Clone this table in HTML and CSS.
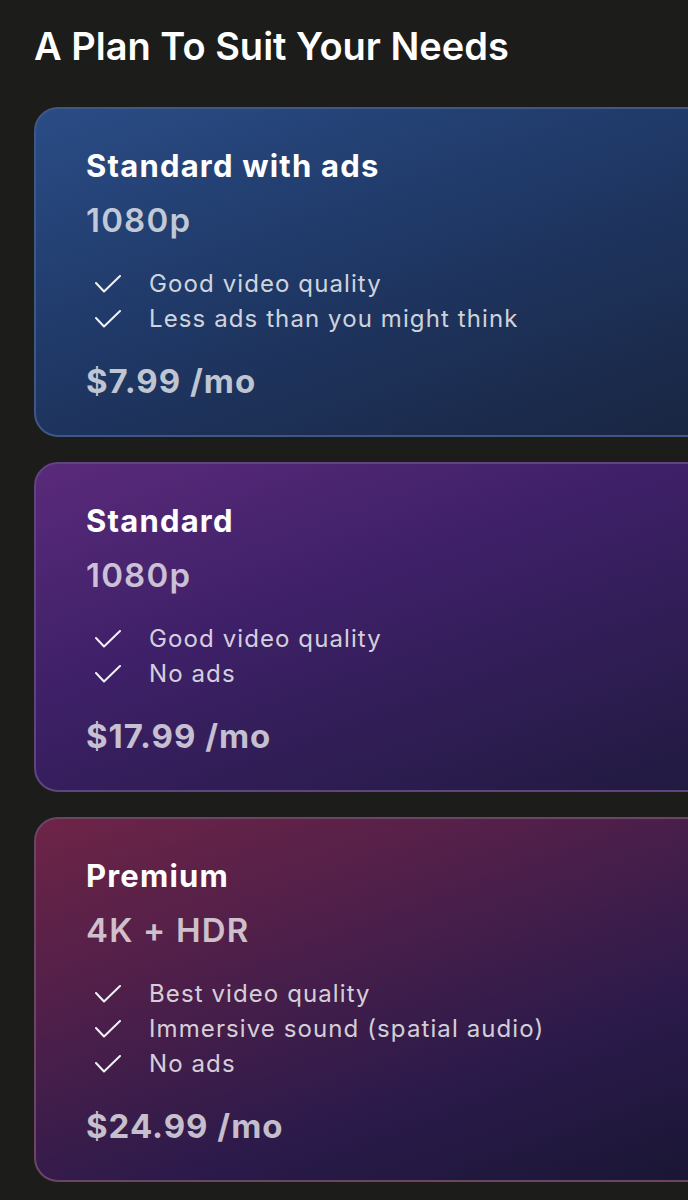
FILE: index.html
```html
<!DOCTYPE html>
<html lang="en">
<head>
  <meta charset="UTF-8" />
  <meta name="viewport" content="width=device-width, initial-scale=1.0"/>
  <title>Plans</title>
  <link rel="stylesheet" href="styles.css">
</head>
<body>
  <h1>A Plan To Suit Your Needs</h1>

  <div class="plans">
    <div class="plan plan-ads">
      <div class="plan-name">Standard with ads</div>
      <div class="plan-res">1080p</div>
      <ul class="features">
        <li><svg class="check" viewBox="0 0 26 18"><polyline points="1,8 9,16.5 25,1"/></svg>Good video quality</li>
        <li><svg class="check" viewBox="0 0 26 18"><polyline points="1,8 9,16.5 25,1"/></svg>Less ads than you might think</li>
      </ul>
      <div class="price">$7.99 /mo</div>
    </div>

    <div class="plan plan-standard">
      <div class="plan-name">Standard</div>
      <div class="plan-res">1080p</div>
      <ul class="features">
        <li><svg class="check" viewBox="0 0 26 18"><polyline points="1,8 9,16.5 25,1"/></svg>Good video quality</li>
        <li><svg class="check" viewBox="0 0 26 18"><polyline points="1,8 9,16.5 25,1"/></svg>No ads</li>
      </ul>
      <div class="price">$17.99 /mo</div>
    </div>

    <div class="plan plan-premium">
      <div class="plan-name">Premium</div>
      <div class="plan-res">4K + HDR</div>
      <ul class="features">
        <li><svg class="check" viewBox="0 0 26 18"><polyline points="1,8 9,16.5 25,1"/></svg>Best video quality</li>
        <li><svg class="check" viewBox="0 0 26 18"><polyline points="1,8 9,16.5 25,1"/></svg>Immersive sound (spatial audio)</li>
        <li><svg class="check" viewBox="0 0 26 18"><polyline points="1,8 9,16.5 25,1"/></svg>No ads</li>
      </ul>
      <div class="price">$24.99 /mo</div>
    </div>
  </div>
</body>
</html>
```

FILE: styles.css
```css
body {
  background-color: #1c1c1b;
  color: #ffffff;
  font-family: 'Inter', sans-serif;
  margin: 0;
  padding: 0 0 0 34px;
  overflow-x: hidden;
}

h1 {
  font-size: 38px;
  font-weight: 600;
  letter-spacing: 0;
  line-height: 44px;
  margin: 24px 0 0;
}

.plans {
  display: flex;
  flex-direction: column;
  gap: 25px;
  margin-top: 39px;
  width: calc(100% + 60px);
}

.plan {
  border: 2px solid;
  border-radius: 24px;
  padding: 39px 50px 35px;
}

.plan-ads {
  background: linear-gradient(160deg, #2a4c86 0%, #1f3866 45%, #19243f 100%);
  border-color: #3e5784;
}

.plan-standard {
  background: linear-gradient(160deg, #5a2a7a 0%, #3e2068 40%, #1f1a3e 100%);
  border-color: #5f4480;
}

.plan-premium {
  background: linear-gradient(160deg, #6e2446 0%, #4d1f4a 35%, #2a1a4a 68%, #181632 100%);
  border-color: #6c4464;
}

.plan-name {
  font-size: 31px;
  font-weight: 700;
  letter-spacing: 1.2px;
  line-height: 36px;
}

.plan-res {
  font-size: 33px;
  font-weight: 600;
  letter-spacing: 1.2px;
  line-height: 38px;
  margin-top: 17px;
  color: rgba(255, 255, 255, 0.72);
}

.features {
  list-style: none;
  margin: 27px 0 0;
  padding: 0;
}

.features li {
  display: flex;
  align-items: center;
  font-size: 24px;
  letter-spacing: 1.1px;
  line-height: 35px;
  color: rgba(255, 255, 255, 0.8);
}

.check {
  width: 26px;
  height: 18px;
  margin: 0 28px 0 9px;
  fill: none;
  stroke: #f2f2f6;
  stroke-width: 2;
  stroke-linecap: round;
  stroke-linejoin: round;
}

.price {
  font-size: 33px;
  font-weight: 700;
  letter-spacing: 1px;
  line-height: 38px;
  margin-top: 26px;
  color: rgba(255, 255, 255, 0.72);
}
```
